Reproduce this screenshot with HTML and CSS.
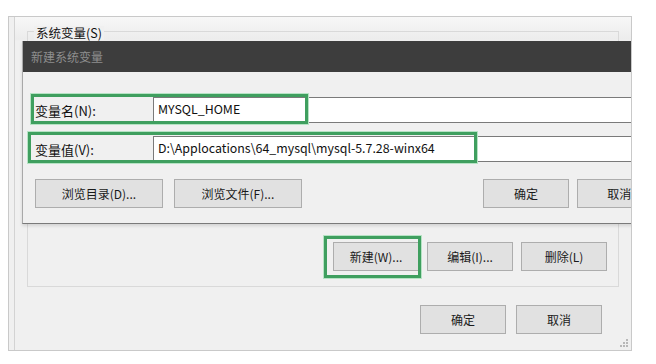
FILE: index.html
```html
<!DOCTYPE html>
<html lang="zh-CN">
<head>
<meta charset="utf-8">
<title>新建系统变量</title>
<link rel="stylesheet" href="styles.css">
</head>
<body>
<div class="stage">
  <div class="window">
    <div class="frame">
      <div class="group">
        <div class="group-label">系统变量(S)</div>
        <div class="group-actions">
          <button class="btn">新建(W)...</button>
          <button class="btn">编辑(I)...</button>
          <button class="btn">删除(L)</button>
        </div>
        <div class="mark mark-new"></div>
      </div>
      <div class="footer">
        <button class="btn">确定</button>
        <button class="btn">取消</button>
      </div>
    </div>
    <svg class="grip" width="10" height="10" viewBox="0 0 10 10">
      <rect x="7" y="1" width="2" height="2" fill="#b8b8b8"/>
      <rect x="4" y="4" width="2" height="2" fill="#b8b8b8"/>
      <rect x="7" y="4" width="2" height="2" fill="#b8b8b8"/>
      <rect x="1" y="7" width="2" height="2" fill="#b8b8b8"/>
      <rect x="4" y="7" width="2" height="2" fill="#b8b8b8"/>
      <rect x="7" y="7" width="2" height="2" fill="#b8b8b8"/>
    </svg>

    <div class="dialog">
      <div class="titlebar">新建系统变量</div>
      <div class="dialog-body">
        <div class="field">
          <label class="field-label">变量名(N):</label>
          <div class="field-input">MYSQL_HOME</div>
        </div>
        <div class="field">
          <label class="field-label">变量值(V):</label>
          <div class="field-input">D:\Applocations\64_mysql\mysql-5.7.28-winx64</div>
        </div>
        <div class="dialog-actions">
          <button class="btn btn-wide">浏览目录(D)...</button>
          <button class="btn btn-wide">浏览文件(F)...</button>
          <span class="spacer"></span>
          <button class="btn">确定</button>
          <button class="btn">取消</button>
        </div>
      </div>
      <div class="mark mark-name"></div>
      <div class="mark mark-value"></div>
    </div>
  </div>
</div>
</body>
</html>
```

FILE: styles.css
```css
html, body {
  margin: 0;
  padding: 0;
  background: #ffffff;
}

body {
  font-family: "Noto Sans CJK SC", "Noto Sans", sans-serif;
  font-size: 13px;
  color: #1a1a1a;
}

.stage {
  padding: 16px 0 0 8px;
  width: 624px;
  height: 335px;
}

.window {
  position: relative;
  box-sizing: border-box;
  width: 624px;
  height: 335px;
  border: 1px solid #c9c9c9;
  background: #f0f0f0;
  overflow: hidden;
}

.frame {
  box-sizing: border-box;
  height: 100%;
  margin-left: 5px;
  border-left: 1px solid #d3d3d3;
  padding: 14px 12px 0 12px;
  background: linear-gradient(#f7f7f7 0, #ececec 22px, #f0f0f0 24px);
  display: flex;
  flex-direction: column;
}

.group {
  position: relative;
  box-sizing: border-box;
  width: 592px;
  height: 256px;
  border: 1px solid #d9d9d9;
  display: flex;
  flex-direction: column;
  justify-content: flex-end;
  align-items: flex-end;
  padding: 0 11px 15px 0;
}

.group-label {
  position: absolute;
  left: 6px;
  top: -6px;
  padding: 0 2px;
  line-height: 14px;
  font-size: 12.5px;
  color: #111;
  background: #f0f0f0;
}

.group-actions {
  display: flex;
  gap: 8px;
}

.footer {
  display: flex;
  justify-content: flex-end;
  gap: 10px;
  padding: 18px 17px 0 0;
}

.btn {
  box-sizing: border-box;
  width: 86px;
  height: 29px;
  border: 1px solid #adadad;
  background: #e1e1e1;
  font-family: "Noto Sans CJK SC", "Noto Sans", sans-serif;
  font-size: 12px;
  color: #1a1a1a;
  padding: 0;
  margin: 0;
}

.btn-wide {
  width: 129px;
}

.grip {
  position: absolute;
  right: 2px;
  bottom: 2px;
}

/* overlay dialog */
.dialog {
  position: absolute;
  left: 13px;
  top: 24px;
  width: 640px;
  height: 183px;
  box-sizing: border-box;
  background: #f0f0f0;
  border-left: 1px solid #a8a8a8;
  border-bottom: 1px solid #7a7a7a;
  box-shadow: 0 2px 3px rgba(0, 0, 0, 0.12);
}

.titlebar {
  height: 31px;
  background: #3d3d3d;
  color: #8e8e8e;
  font-size: 12px;
  line-height: 31px;
  padding-left: 8px;
}

.dialog-body {
  padding: 25px 0 0 12px;
  display: flex;
  flex-direction: column;
}

.field {
  display: flex;
  align-items: center;
  height: 26px;
}

.field + .field {
  margin-top: 13px;
}

.field-label {
  width: 118px;
  flex: none;
  font-size: 13px;
  color: #111;
}

.field-input {
  flex: 1;
  box-sizing: border-box;
  height: 26px;
  background: #ffffff;
  border: 1px solid #7a7a7a;
  padding-left: 4px;
  font-size: 12.4px;
  line-height: 23px;
  color: #111;
  white-space: nowrap;
}

.dialog-actions {
  display: flex;
  align-items: center;
  margin-top: 17px;
  gap: 11px;
}

.dialog-actions .spacer {
  width: 161px;
}

.dialog-actions .btn + .btn:last-child {
  margin-left: -3px;
}

/* green annotation boxes */
.mark {
  position: absolute;
  box-sizing: border-box;
  border: 3px solid #3f9f5f;
  box-shadow: 0 0 0 1px #b6e3c4;
  pointer-events: none;
}

.mark-name {
  left: 8px;
  top: 53px;
  width: 277px;
  height: 30px;
}

.mark-value {
  left: 5px;
  top: 91px;
  width: 449px;
  height: 31px;
}

.mark-new {
  left: 296px;
  top: 204px;
  width: 97px;
  height: 42px;
}
```
